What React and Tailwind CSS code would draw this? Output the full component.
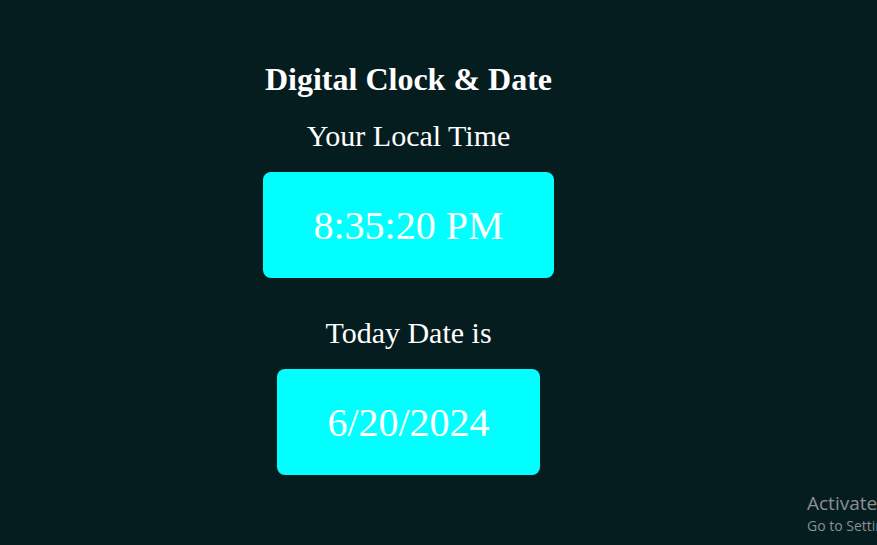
import React from 'react';

function Box({ children }) {
  return (
    <div className="h-[106px] flex items-center bg-[#00ffff] rounded-[8px] px-[50px] pt-[2px] text-white text-[40px] leading-[46px]">
      {children}
    </div>
  );
}

export default function App() {
  return (
    <div className="relative w-[877px] h-[545px] overflow-hidden bg-[#061d1f] font-['Liberation_Serif',serif] text-white">
      <div className="w-[817px] flex flex-col items-center pt-[61px]">
        <h1 className="font-bold text-[32px] leading-[36px]">Digital Clock &amp; Date</h1>
        <p className="mt-[22px] text-[30px] leading-[34px]">Your Local Time</p>
        <div className="mt-[19px]">
          <Box>8:35:20 PM</Box>
        </div>
        <p className="mt-[38px] text-[30px] leading-[34px]">Today Date is</p>
        <div className="mt-[19px]">
          <Box>6/20/2024</Box>
        </div>
      </div>
      <div className="absolute left-[807px] top-[491px] font-['Open_Sans',sans-serif] text-[#8b9090] whitespace-nowrap">
        <div className="text-[19px] leading-[25px]">Activate Windows</div>
        <div className="text-[14px] leading-[19px]">Go to Settings to activate Windows.</div>
      </div>
    </div>
  );
}
